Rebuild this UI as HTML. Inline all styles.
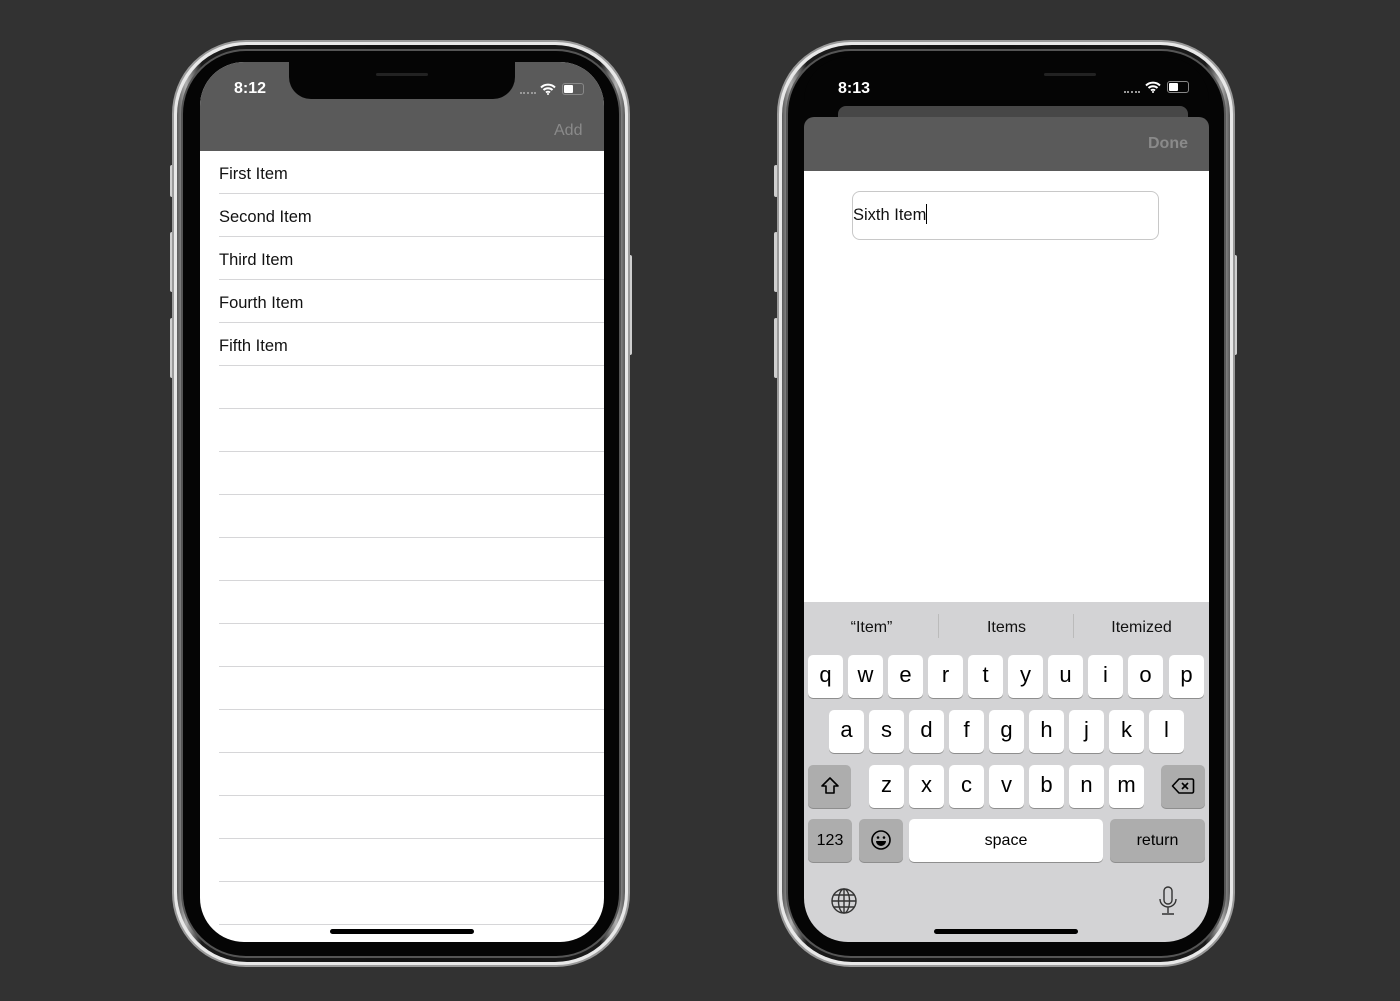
<!DOCTYPE html>
<html><head><meta charset="utf-8"><style>
*{margin:0;padding:0;box-sizing:border-box}
body{width:1400px;height:1001px;background:#323232;position:relative;overflow:hidden;font-family:"Liberation Sans",sans-serif}
.abs{position:absolute}
.frame{position:absolute;border-radius:74px;background:#e8e8e8;border:2px solid #9a9a9a}
.f2{position:absolute;inset:3px;border-radius:70px;background:linear-gradient(90deg,#5a5a5a,#b0b0b0 2%,#777 3.5%,#1a1a1a 5.5%,#111 50%,#1a1a1a 94.5%,#777 96.5%,#b0b0b0 98%,#5a5a5a)}
.f3{position:absolute;inset:9px;border-radius:63px;background:#050505;box-shadow:0 0 0 2px #555}
.screen{position:absolute;overflow:hidden;border-radius:44px}
.row{position:absolute;left:19px;right:0;height:43px;border-bottom:1px solid #d6d6d8;font-size:16.5px;color:#111;line-height:47px}
.key{position:absolute;width:35px;height:43px;background:#fff;border-radius:5px;box-shadow:0 1px 0 #8e8e8e;text-align:center;font-size:22px;line-height:40px;color:#000}
.gk{background:#adadad}
.side{position:absolute;width:4px;background:#cfcfcf;border-radius:2px}
</style></head><body>

<!-- LEFT PHONE -->
<div class="side" style="left:170px;top:165px;height:32px"></div>
<div class="side" style="left:170px;top:232px;height:60px"></div>
<div class="side" style="left:170px;top:318px;height:60px"></div>
<div class="side" style="left:628px;top:255px;height:100px"></div>
<div class="frame" style="left:172px;top:40px;width:458px;height:927px">
 <div class="f2"></div><div class="f3"></div>
</div>
<div class="screen" style="left:200px;top:62px;width:404px;height:880px;background:#fff">
 <div class="abs" style="left:0;top:0;width:404px;height:89px;background:#5a5a5a"></div>
 <div class="abs" style="left:89px;top:-10px;width:226px;height:47px;background:#050505;border-radius:0 0 22px 22px"></div>
 <div class="abs" style="left:176px;top:11px;width:52px;height:3px;background:#222;border-radius:2px"></div>
 <div class="abs" style="left:34px;top:18px;color:#fff;font-size:16px;font-weight:bold">8:12</div>
 <div class="abs" style="left:320px;top:30px;width:16px;border-top:2px dotted #999"></div>
 <svg class="abs" style="left:340px;top:21px" width="16" height="12" viewBox="0 0 16 12"><path d="M1 4.5a10 10 0 0 1 14 0M3.5 7a6.5 6.5 0 0 1 9 0M6 9.5a3 3 0 0 1 4 0" stroke="#fff" stroke-width="2" fill="none"/><circle cx="8" cy="11" r="1" fill="#fff"/></svg>
 <div class="abs" style="left:362px;top:21px;width:22px;height:12px;border:1px solid #888;border-radius:3px"><div style="margin:1px;width:9px;height:8px;background:#fff;border-radius:1px"></div></div>
 <div class="abs" style="left:354px;top:60px;color:#8a8a8a;font-size:16px">Add</div>
 <div class="row" style="top:89px">First Item</div>
 <div class="row" style="top:132px">Second Item</div>
 <div class="row" style="top:175px">Third Item</div>
 <div class="row" style="top:218px">Fourth Item</div>
 <div class="row" style="top:261px">Fifth Item</div>
 <div class="row" style="top:304px"></div><div class="row" style="top:347px"></div>
 <div class="row" style="top:390px"></div><div class="row" style="top:433px"></div>
 <div class="row" style="top:476px"></div><div class="row" style="top:519px"></div>
 <div class="row" style="top:562px"></div><div class="row" style="top:605px"></div>
 <div class="row" style="top:648px"></div><div class="row" style="top:691px"></div>
 <div class="row" style="top:734px"></div><div class="row" style="top:777px"></div>
 <div class="row" style="top:820px"></div>
 <div class="abs" style="left:130px;top:867px;width:144px;height:5px;background:#000;border-radius:3px"></div>
</div>

<!-- RIGHT PHONE -->
<div class="side" style="left:774px;top:165px;height:32px"></div>
<div class="side" style="left:774px;top:232px;height:60px"></div>
<div class="side" style="left:774px;top:318px;height:60px"></div>
<div class="side" style="left:1233px;top:255px;height:100px"></div>
<div class="frame" style="left:777px;top:40px;width:458px;height:927px">
 <div class="f2"></div><div class="f3"></div>
</div>
<div class="screen" style="left:804px;top:57px;width:405px;height:885px;background:#050505">
 <div class="abs" style="left:240px;top:16px;width:52px;height:3px;background:#222;border-radius:2px"></div>
 <div class="abs" style="left:34px;top:23px;color:#fff;font-size:16px;font-weight:bold">8:13</div>
 <div class="abs" style="left:320px;top:34px;width:16px;border-top:2px dotted #999"></div>
 <svg class="abs" style="left:341px;top:24px" width="16" height="12" viewBox="0 0 16 12"><path d="M1 4.5a10 10 0 0 1 14 0M3.5 7a6.5 6.5 0 0 1 9 0M6 9.5a3 3 0 0 1 4 0" stroke="#fff" stroke-width="2" fill="none"/><circle cx="8" cy="11" r="1" fill="#fff"/></svg>
 <div class="abs" style="left:363px;top:24px;width:22px;height:12px;border:1px solid #888;border-radius:3px"><div style="margin:1px;width:9px;height:8px;background:#fff;border-radius:1px"></div></div>
 <div class="abs" style="left:34px;top:49px;width:350px;height:20px;background:#474747;border-radius:8px 8px 0 0"></div>
 <div class="abs" style="left:0;top:60px;width:405px;height:60px;background:#5a5a5a;border-radius:10px 10px 0 0"></div>
 <div class="abs" style="left:344px;top:78px;color:#8a8a8a;font-size:16px;font-weight:bold">Done</div>
 <div class="abs" style="left:0;top:114px;width:405px;height:431px;background:#fff"></div>
 <div class="abs" style="left:48px;top:134px;width:307px;height:49px;border:1px solid #c8c8c8;border-radius:8px;font-size:16.5px;line-height:46px;color:#111">Sixth Item<span style="display:inline-block;width:1px;height:20px;background:#000;vertical-align:-4px"></span></div>
 <div class="abs" style="left:0;top:545px;width:405px;height:345px;background:#d3d3d5">
  <div class="abs" style="left:0;top:0;width:135px;height:48px;text-align:center;line-height:52px;font-size:16px;color:#111">“Item”</div>
  <div class="abs" style="left:134px;top:12px;width:1px;height:24px;background:#bbb"></div>
  <div class="abs" style="left:135px;top:0;width:135px;height:48px;text-align:center;line-height:52px;font-size:16px;color:#111">Items</div>
  <div class="abs" style="left:269px;top:12px;width:1px;height:24px;background:#bbb"></div>
  <div class="abs" style="left:270px;top:0;width:135px;height:48px;text-align:center;line-height:52px;font-size:16px;color:#111">Itemized</div>

  <div class="key" style="left:4px;top:53px">q</div><div class="key" style="left:44px;top:53px">w</div>
  <div class="key" style="left:84px;top:53px">e</div><div class="key" style="left:124px;top:53px">r</div>
  <div class="key" style="left:164px;top:53px">t</div><div class="key" style="left:204px;top:53px">y</div>
  <div class="key" style="left:244px;top:53px">u</div><div class="key" style="left:284px;top:53px">i</div>
  <div class="key" style="left:324px;top:53px">o</div><div class="key" style="left:365px;top:53px">p</div>

  <div class="key" style="left:25px;top:108px">a</div><div class="key" style="left:65px;top:108px">s</div>
  <div class="key" style="left:105px;top:108px">d</div><div class="key" style="left:145px;top:108px">f</div>
  <div class="key" style="left:185px;top:108px">g</div><div class="key" style="left:225px;top:108px">h</div>
  <div class="key" style="left:265px;top:108px">j</div><div class="key" style="left:305px;top:108px">k</div>
  <div class="key" style="left:345px;top:108px">l</div>

  <div class="key gk" style="left:4px;top:163px;width:43px"><svg width="20" height="20" viewBox="0 0 20 20" style="margin-top:11px"><path d="M10 2L2 10h4v7h8v-7h4z" fill="none" stroke="#000" stroke-width="1.6" stroke-linejoin="round"/></svg></div>
  <div class="key" style="left:65px;top:163px">z</div><div class="key" style="left:105px;top:163px">x</div>
  <div class="key" style="left:145px;top:163px">c</div><div class="key" style="left:185px;top:163px">v</div>
  <div class="key" style="left:225px;top:163px">b</div><div class="key" style="left:265px;top:163px">n</div>
  <div class="key" style="left:305px;top:163px">m</div>
  <div class="key gk" style="left:357px;top:163px;width:44px"><svg width="24" height="18" viewBox="0 0 24 18" style="margin-top:12px"><path d="M8 2h13a1.5 1.5 0 0 1 1.5 1.5v11a1.5 1.5 0 0 1-1.5 1.5H8L1.5 9z" fill="none" stroke="#000" stroke-width="1.6" stroke-linejoin="round"/><path d="M11 6l6 6M17 6l-6 6" stroke="#000" stroke-width="1.6"/></svg></div>

  <div class="key gk" style="left:4px;top:217px;width:44px;font-size:16px;line-height:43px">123</div>
  <div class="key gk" style="left:55px;top:217px;width:44px"><svg width="22" height="22" viewBox="0 0 22 22" style="margin-top:10px"><circle cx="11" cy="11" r="9" fill="none" stroke="#000" stroke-width="1.6"/><circle cx="8" cy="8.5" r="1.3"/><circle cx="14" cy="8.5" r="1.3"/><path d="M6 12h10a5 5 0 0 1-10 0z"/></svg></div>
  <div class="key" style="left:105px;top:217px;width:194px;font-size:16px;line-height:43px">space</div>
  <div class="key gk" style="left:306px;top:217px;width:95px;font-size:16px;line-height:43px">return</div>

  <svg class="abs" style="left:27px;top:286px" width="26" height="26" viewBox="0 0 26 26"><g fill="none" stroke="#333" stroke-width="1.4"><circle cx="13" cy="13" r="12"/><ellipse cx="13" cy="13" rx="5.5" ry="12"/><path d="M13 1v24M1 13h24M3 7h20M3 19h20"/></g></svg>
  <svg class="abs" style="left:354px;top:284px" width="20" height="30" viewBox="0 0 20 30"><g fill="none" stroke="#333" stroke-width="1.4"><rect x="6" y="1" width="8" height="17" rx="4"/><path d="M2 13a8 8 0 0 0 16 0M10 21v6M4 28h12"/></g></svg>
  <div class="abs" style="left:130px;top:327px;width:144px;height:5px;background:#000;border-radius:3px"></div>
 </div>
</div>
</body></html>
